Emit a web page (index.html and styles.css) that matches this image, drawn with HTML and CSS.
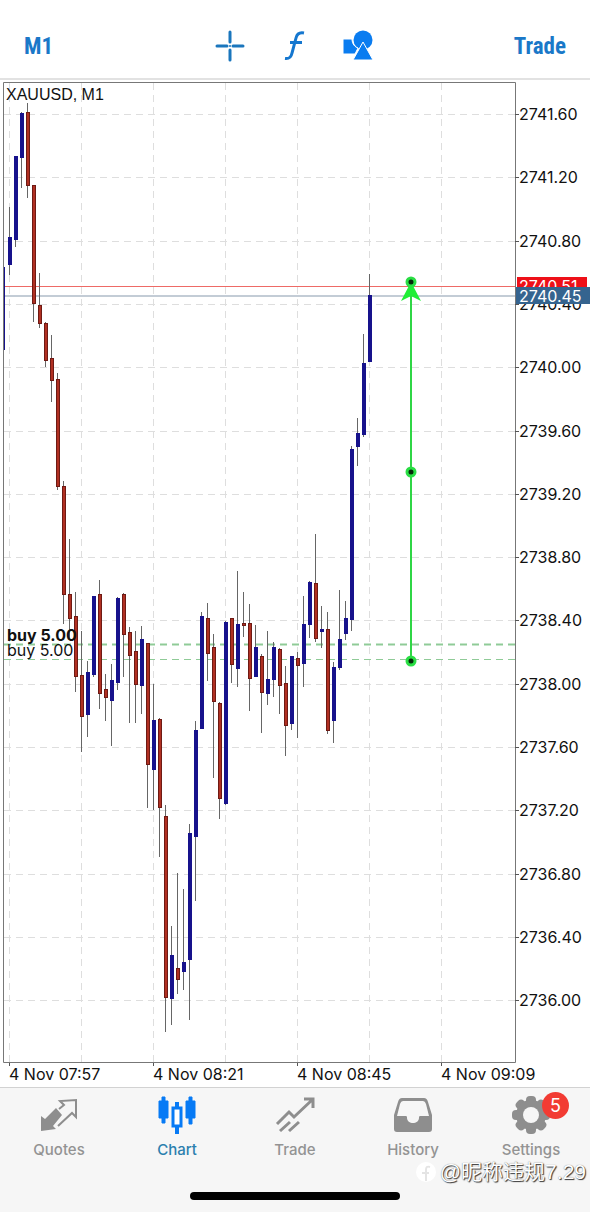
FILE: index.html
```html
<!DOCTYPE html>
<html lang="en">
<head>
    <meta charset="UTF-8">
    <meta name="viewport" content="width=device-width, initial-scale=1.0">
    <title>XAUUSD, M1</title>
    <link rel="stylesheet" href="styles.css">
</head>
<body>
    <header class="toolbar">
        <button type="button" class="text-button">M1</button>
        <div class="tools">
            <button type="button" class="icon-button" aria-label="Crosshair">
                <svg width="32" height="32" viewBox="0 0 32 32">
                    <path d="M15 2v10M15 20v10M2 16h10M18 16h10" fill="none" stroke="#1a76bd" stroke-width="3" stroke-linecap="round"/>
                    <circle cx="15" cy="16" r="1" fill="#1a76bd"/>
                </svg>
            </button>
            <button type="button" class="icon-button" aria-label="Indicators">
                <svg width="32" height="32" viewBox="0 0 32 32">
                    <path d="M25 3c-5-1-7 1-8 5l-4 15c-1 5-3 6-7 5.5M11 12.5h12" fill="none" stroke="#1577cf" stroke-width="3"/>
                </svg>
            </button>
            <button type="button" class="icon-button" aria-label="Objects">
                <svg width="32" height="32" viewBox="0 0 32 32">
                    <circle cx="20" cy="10" r="9.5" fill="#0a7cf0"/>
                    <path d="M0 9h9c0 5 3 8 6 9l-3 6H0z" fill="#0a7cf0" stroke="#fff" stroke-width="1"/>
                    <path d="M20 12l10 18H10z" fill="#0a7cf0" stroke="#fff" stroke-width="1"/>
                </svg>
            </button>
        </div>
        <button type="button" class="text-button trade">Trade</button>
    </header>

    <main>
        <svg id="chart" class="chart" viewBox="0 80 590 1007">
            <g id="grid" class="grid"></g>
            <path class="bid" d="M4 296H516"/>
            <path class="ask" d="M4 286.5H516"/>
            <path class="order order-double" d="M4 644.5H515"/>
            <path class="order" d="M4 659.5H515"/>
            <g id="candles"></g>

            <path class="frame" d="M3.5 82.5H515.5V1062.5H3.5z"/>
            <text class="symbol" x="6" y="100">XAUUSD, M1</text>
            <text class="label bold" x="7" y="641">buy 5.00</text>
            <text class="label" x="7" y="656">buy 5.00</text>

            <g class="arrow">
                <path class="arrow-line" d="M411 282V661"/>
                <path class="arrow-head" d="M411 282l10 19-10-5-10 5z"/>
                <circle cx="411" cy="282" r="4"/>
                <circle cx="411" cy="472" r="4"/>
                <circle cx="411" cy="661" r="4"/>
            </g>

            <g id="axis"></g>
            <rect x="517" y="277" width="70" height="18" fill="#ee1018"/>
            <text class="label tag" x="519" y="292">2740.51</text>
            <rect x="516" y="287" width="74" height="17" fill="#35648f"/>
            <text class="label tag" x="519" y="302">2740.45</text>
        </svg>
    </main>

    <footer class="bottom">
        <nav class="tabs">
            <a href="#quotes" class="tab">
                <svg width="40" height="40" viewBox="0 0 40 40">
                    <path d="M2 20v15l15-2-3-3 9-11-6-7-11 11z" fill="#8e8e8e"/>
                    <path d="M20 13l5-4-4-4 16-1v17l-4-4-14 13" fill="none" stroke="#8e8e8e" stroke-width="2"/>
                </svg>
                <span>Quotes</span>
            </a>
            <a href="#chart" class="tab active">
                <svg width="40" height="40" viewBox="0 0 40 40">
                    <path d="M2 5h3V1h3v4h3v17H8v5H5v-5H2zM29 5h3V1h3v4h3v17h-3v6h-3v-6h-3z" fill="#077af5" stroke="#077af5"/>
                    <path d="M20 6v5M20 30v8" stroke="#077af5" stroke-width="4"/>
                    <rect x="16" y="12" width="8" height="18" fill="#fff" stroke="#077af5" stroke-width="3"/>
                </svg>
                <span>Chart</span>
            </a>
            <a href="#trade" class="tab">
                <svg width="40" height="40" viewBox="0 0 40 40">
                    <path d="M2 28l12-12 5 5L37 4M29 3h9v9M5 35l10-9M14 35l10-9" fill="none" stroke="#8e8e8e" stroke-width="3"/>
                </svg>
                <span>Trade</span>
            </a>
            <a href="#history" class="tab">
                <svg width="40" height="40" viewBox="0 0 40 40">
                    <path d="M9 2h22q3 0 4 4l4 13v14q0 3-3 3H4q-3 0-3-3V19L5 6q1-4 4-4zM10 5q-2 0-3 3L4 20h9c1 0 1 1 1 2 0 3 3 5 6 5s6-2 6-5c0-1 0-2 1-2h9L33 8q-1-3-3-3z" fill="#8e8e8e" fill-rule="evenodd"/>
                </svg>
                <span>History</span>
            </a>
            <a href="#settings" class="tab">
                <svg width="40" height="40" viewBox="0 0 40 40">
                    <g fill="#8e8e8e">
                        <rect x="15" y="0" width="10" height="38" rx="4"/>
                        <rect x="15" y="0" width="10" height="38" rx="4" transform="rotate(45 20 19)"/>
                        <rect x="15" y="0" width="10" height="38" rx="4" transform="rotate(90 20 19)"/>
                        <rect x="15" y="0" width="10" height="38" rx="4" transform="rotate(135 20 19)"/>
                        <circle cx="20" cy="19" r="15"/>
                    </g>
                    <circle cx="20" cy="19" r="8" fill="#f6f6f6"/>
                </svg>
                <span>Settings</span>
                <b class="badge">5</b>
            </a>
        </nav>
        <div class="watermark">
            <svg width="20" height="20" viewBox="0 0 20 20">
                <circle cx="10" cy="10" r="10" fill="#fff"/>
                <path d="M14 5c-3-1-4 0-4 3v11M6 11h7" fill="none" stroke="#e4e4e4" stroke-width="2"/>
            </svg>
            <span>@昵称违规7.29</span>
        </div>
        <div class="home-indicator"></div>
    </footer>

    <script src="chart.js"></script>
</body>
</html>
```

FILE: styles.css
```css
body {
    margin: 0;
    min-height: 100vh;
    display: flex;
    flex-direction: column;
    background-color: #fff;
    font-family: Inter, "Liberation Sans", sans-serif;
}

button {
    border: none;
    padding: 0;
    background: none;
    cursor: pointer;
}

.toolbar {
    display: grid;
    grid-template-columns: 1fr auto 1fr;
    align-items: center;
    box-sizing: border-box;
    height: 80px;
    padding: 14px 24px 0;
    border-bottom: 2px solid #e2e2e2;
}

.text-button {
    justify-self: start;
    font-family: "Liberation Sans Narrow", "Roboto Condensed", Roboto, sans-serif;
    font-size: 23px;
    font-weight: bold;
    color: #1a78c8;
}

.trade {
    justify-self: end;
}

.tools {
    display: flex;
    gap: 32px;
}

.icon-button {
    display: flex;
}

.chart {
    display: block;
    width: 100%;
    height: auto;
}

.grid {
    stroke: #dedede;
    stroke-dasharray: 7 5;
}

.frame {
    fill: none;
    stroke: #777;
}

.tick {
    stroke: #555;
}

.ask {
    stroke: #ee6a66;
}

.bid {
    stroke: #8799ac;
}

.order {
    stroke: #8fcb97;
    stroke-dasharray: 7 5;
}

.order-double {
    stroke-width: 2;
}

.wick {
    stroke: #666;
}

.up {
    fill: #17128c;
}

.down {
    fill: #b03022;
    stroke: #6e1a14;
}

.arrow-line {
    stroke: #2fd645;
    stroke-width: 2;
}

.arrow-head {
    fill: #1fee35;
}

.arrow circle {
    fill: #06280a;
    stroke: #2ade44;
    stroke-width: 3;
}

.label {
    font-size: 16px;
    fill: #111;
}

.bold {
    font-weight: bold;
}

.tag {
    fill: #fff;
}

.symbol {
    font-family: "Liberation Sans", sans-serif;
    font-size: 16px;
    fill: #111;
}

.bottom {
    position: relative;
    flex: 1;
    display: flex;
    flex-direction: column;
    justify-content: space-between;
    align-items: center;
    box-sizing: border-box;
    padding-bottom: 12px;
    border-top: 1px solid #d2d2d2;
    background-color: #f6f6f6;
}

.tabs {
    display: flex;
    width: 100%;
    padding-top: 8px;
}

.tab {
    position: relative;
    flex: 1;
    display: flex;
    flex-direction: column;
    align-items: center;
    gap: 4px;
    font-size: 15px;
    font-weight: 500;
    line-height: 20px;
    color: #939393;
    text-decoration: none;
}

.active {
    color: #2b7fae;
}

.badge {
    position: absolute;
    top: -4px;
    left: calc(50% + 11px);
    width: 27px;
    border-radius: 14px;
    background-color: #f23b33;
    color: #fff;
    font-size: 18px;
    font-weight: normal;
    line-height: 27px;
    text-align: center;
}

.watermark {
    position: absolute;
    right: 4px;
    bottom: 26px;
    display: flex;
    align-items: center;
    gap: 4px;
    color: #fff;
    font-family: "Liberation Sans", "Noto Sans CJK SC", sans-serif;
    font-size: 21px;
    line-height: 28px;
    text-shadow: 1px 1px 1px #333, 0 0 1px #777;
}

.home-indicator {
    width: 210px;
    height: 8px;
    border-radius: 4px;
    background-color: #000;
}
```

FILE: chart.js
```js
// high, body top, body bottom, low, direction
const candles = [
    [267, 267, 350, 350, 'up'], [207, 237, 265, 275, 'up'], [156, 156, 240, 247, 'up'],
    [112, 113, 158, 188, 'up'], [103, 112, 186, 198, 'down'], [185, 185, 304, 322, 'down'],
    [273, 305, 324, 328, 'down'], [322, 323, 361, 367, 'down'], [335, 358, 381, 402, 'down'],
    [373, 379, 487, 490, 'down'], [481, 486, 595, 624, 'down'], [539, 594, 619, 640, 'down'],
    [592, 616, 677, 692, 'down'], [631, 675, 717, 752, 'down'], [661, 672, 715, 737, 'up'],
    [596, 596, 675, 677, 'up'], [580, 594, 694, 709, 'down'], [674, 689, 698, 721, 'down'],
    [664, 680, 701, 746, 'up'], [597, 598, 683, 690, 'up'], [593, 594, 635, 677, 'down'],
    [627, 632, 656, 723, 'down'], [631, 651, 685, 723, 'down'], [626, 639, 686, 714, 'up'],
    [643, 643, 765, 808, 'down'], [684, 720, 770, 810, 'up'], [718, 719, 808, 857, 'down'],
    [805, 816, 998, 1032, 'down'], [926, 955, 999, 1025, 'up'], [873, 968, 980, 994, 'down'],
    [889, 962, 972, 990, 'up'], [824, 833, 960, 1020, 'up'], [721, 730, 837, 901, 'up'],
    [612, 616, 729, 729, 'up'], [603, 618, 654, 681, 'down'], [634, 647, 702, 778, 'down'],
    [702, 703, 799, 819, 'down'], [621, 622, 804, 805, 'up'], [618, 618, 665, 683, 'down'],
    [571, 624, 669, 687, 'up'], [592, 623, 626, 637, 'down'], [604, 623, 679, 711, 'down'],
    [625, 647, 677, 677, 'up'], [654, 656, 693, 733, 'down'], [631, 679, 694, 705, 'up'],
    [642, 647, 680, 697, 'up'], [648, 649, 686, 714, 'down'], [666, 683, 726, 756, 'down'],
    [656, 656, 724, 730, 'up'], [652, 658, 666, 738, 'down'], [596, 624, 664, 687, 'up'],
    [581, 582, 625, 638, 'up'], [534, 583, 639, 642, 'down'], [606, 629, 632, 648, 'up'],
    [612, 629, 731, 734, 'down'], [662, 667, 721, 743, 'up'], [590, 639, 668, 670, 'up'],
    [601, 618, 634, 640, 'up'], [446, 449, 620, 631, 'up'], [418, 433, 447, 466, 'up'],
    [334, 363, 435, 437, 'up'], [274, 295, 362, 362, 'up']
];

const dates = ['4 Nov 07:57', '4 Nov 08:21', '4 Nov 08:45', '4 Nov 09:09'];

function drawCandles() {
    document.getElementById('candles').innerHTML = candles.map(([high, top, bottom, low, type], i) => {
        const x = 3 + i * 6;
        if (i === 0) {
            // half of the first candle is outside the plot
            return `<rect class="${type}" x="3" y="${top}" width="2" height="${bottom - top}"/>`;
        }
        const body = type === 'up'
            ? `<rect class="up" x="${x - 1}" y="${top}" width="4" height="${bottom - top}"/>`
            : `<rect class="down" x="${x - 0.5}" y="${top + 0.5}" width="3" height="${bottom - top - 1}"/>`;
        return `<path class="wick" d="M${x + 0.5} ${high}V${low}"/>${body}`;
    }).join('');
}

function drawAxes() {
    let grid = '';
    let axis = '';
    for (let i = 0; i < 15; i++) {
        const y = Math.round(114 + i * 63.3);
        const price = (2741.6 - i * 0.4).toFixed(2);
        grid += `<path d="M4 ${y + 0.5}H515"/>`;
        axis += `<path class="tick" d="M515 ${y + 0.5}h4"/><text class="label" x="519" y="${y + 6}">${price}</text>`;
    }
    for (let i = 0; i < 7; i++) {
        grid += `<path d="M${9.5 + i * 72} 83V1062"/>`;
    }
    dates.forEach((date, i) => {
        const x = 9 + i * 144;
        axis += `<path class="tick" d="M${x + 0.5} 1063v3"/><text class="label" x="${x}" y="1080">${date}</text>`;
    });
    document.getElementById('grid').innerHTML = grid;
    document.getElementById('axis').innerHTML = axis;
}

drawAxes();
drawCandles();
```
